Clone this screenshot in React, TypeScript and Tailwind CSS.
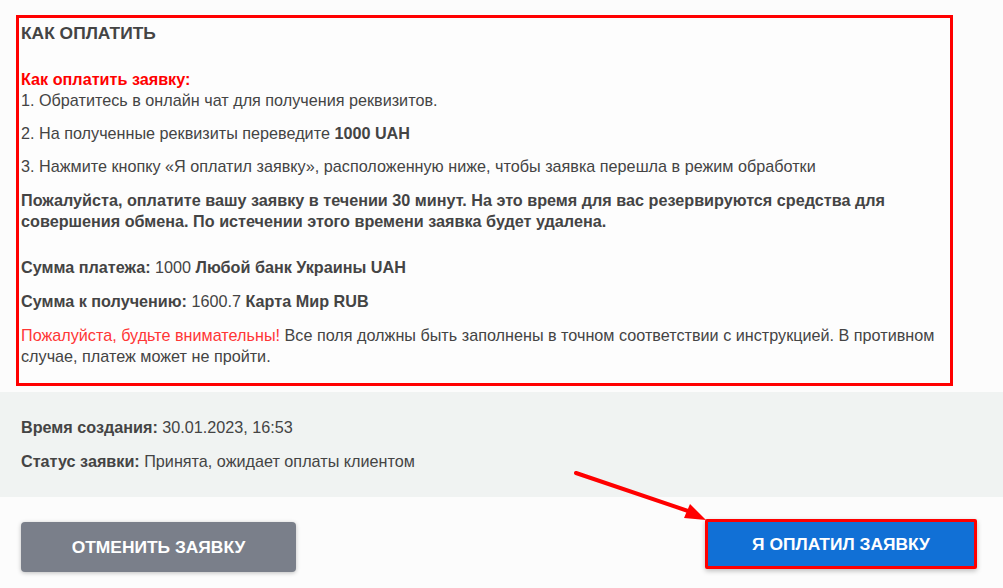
export default function App() {
  return (
    <div className="relative min-h-[588px] w-[1003px] bg-[#fcfcfc] font-['Liberation_Sans',Arial,sans-serif] text-[#444444]">
      {/* payment instructions, outlined in red */}
      <div className="pl-[16px] pt-[15px]">
        <div className="w-[937px] border-[3px] border-[#ff0000] bg-[#fdfdfd] px-[2px] pt-[4px] pb-[16px] text-[16.2px] leading-[21px]">
          <h3 className="mb-[25px] text-[17.4px] font-bold leading-[22px]">КАК ОПЛАТИТЬ</h3>
          <p className="mb-[12px]">
            <span className="font-bold text-[#ff0000]">Как оплатить заявку:</span>
            <br />
            1. Обратитесь в онлайн чат для получения реквизитов.
          </p>
          <p className="mb-[12px]">
            2. На полученные реквизиты переведите <b>1000 UAH</b>
          </p>
          <p className="mb-[13px]">
            3. Нажмите кнопку «Я оплатил заявку», расположенную ниже, чтобы заявка перешла в режим обработки
          </p>
          <p className="mb-[25px] font-bold">
            Пожалуйста, оплатите вашу заявку в течении 30 минут. На это время для вас резервируются средства для
            совершения обмена. По истечении этого времени заявка будет удалена.
          </p>
          <p className="mb-[13px]">
            <b>Сумма платежа:</b> 1000 <b>Любой банк Украины UAH</b>
          </p>
          <p className="mb-[13px]">
            <b>Сумма к получению:</b> 1600.7 <b>Карта Мир RUB</b>
          </p>
          <p>
            <span className="text-[#ff3636]">Пожалуйста, будьте внимательны!</span> Все поля должны быть заполнены в
            точном соответствии с инструкцией. В противном случае, платеж может не пройти.
          </p>
        </div>
      </div>

      {/* order info */}
      <div className="mt-[6px] bg-[#f0f3f2] px-[21px] pt-[25px] pb-[25px] text-[16.2px] leading-[21px]">
        <p className="mb-[13px]">
          <b>Время создания:</b> 30.01.2023, 16:53
        </p>
        <p>
          <b>Статус заявки:</b> Принята, ожидает оплаты клиентом
        </p>
      </div>

      {/* actions */}
      <div className="flex items-start justify-between pl-[21px] pr-[26px] pt-[22px]">
        <button className="mt-[3px] flex h-[50px] w-[275px] items-center justify-center rounded-[4px] bg-[#7a7f8a] text-[17.4px] font-bold text-white shadow-[0_1px_4px_rgba(0,0,0,0.25)]">
          ОТМЕНИТЬ ЗАЯВКУ
        </button>
        <button className="flex h-[50px] w-[272px] items-center justify-center rounded-[2px] border-[3px] border-[#ff0000] bg-[#1170d6] text-[17.4px] font-bold text-white shadow-[0_2px_5px_rgba(0,0,0,0.25)]">
          Я ОПЛАТИЛ ЗАЯВКУ
        </button>
      </div>

      {/* annotation arrow */}
      <svg className="pointer-events-none absolute left-0 top-0" width="1003" height="588" viewBox="0 0 1003 588">
        <line x1="576" y1="473" x2="694" y2="513" stroke="#ff0000" strokeWidth="4" strokeLinecap="round" />
        <polygon points="706,520 690,504 684,518" fill="#ff0000" />
      </svg>
    </div>
  )
}
